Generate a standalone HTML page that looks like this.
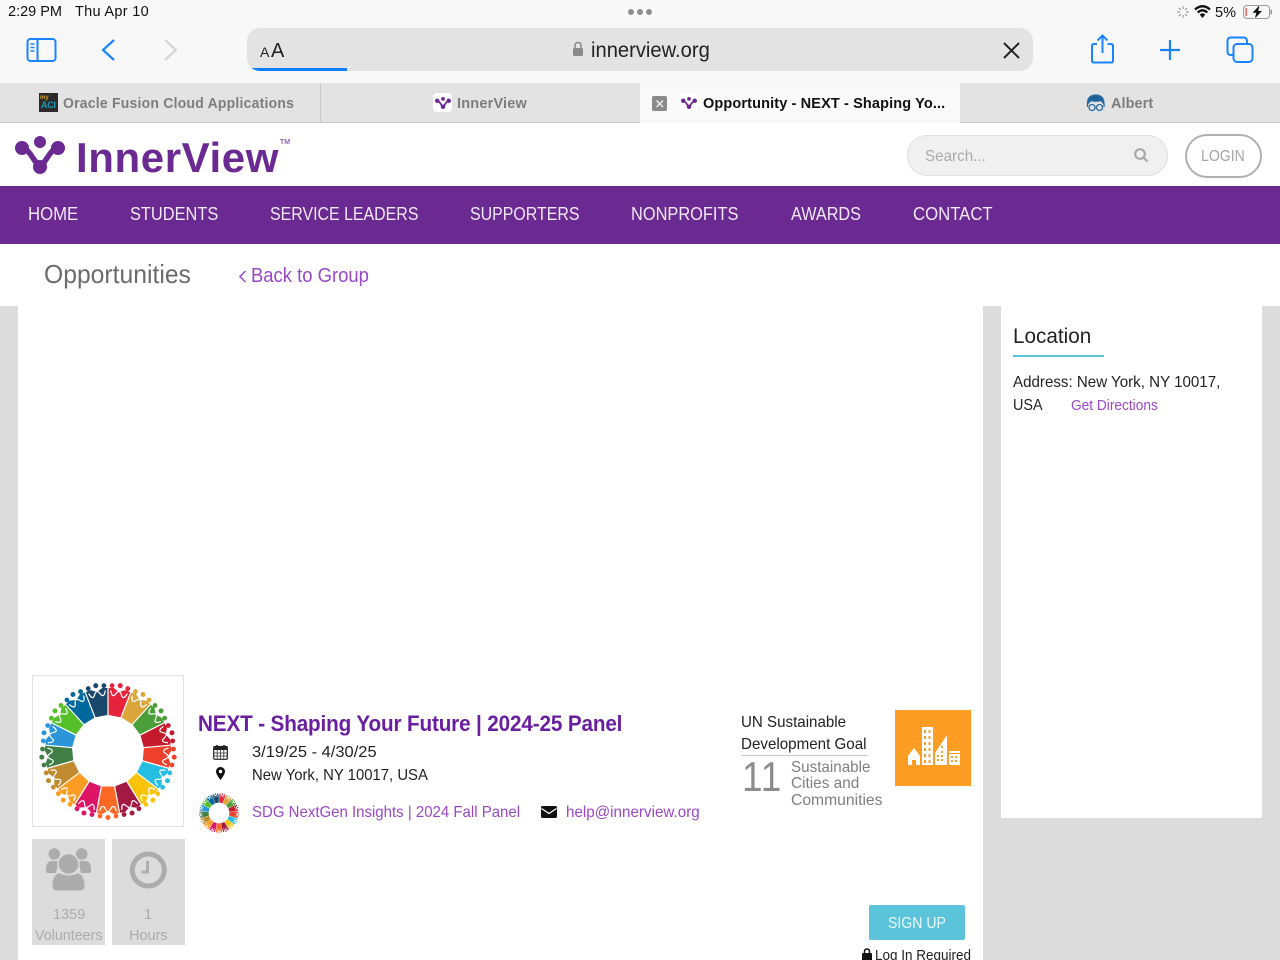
<!DOCTYPE html>
<html><head><meta charset="utf-8"><title>InnerView</title>
<style>
html,body{margin:0;padding:0;width:1280px;height:960px;overflow:hidden;background:#fff}
body{position:relative;font-family:"Liberation Sans",sans-serif;color:#222}
.b{position:absolute}
.t{position:absolute;white-space:nowrap;line-height:1;transform-origin:0 50%}
.n{color:#f1e8f6;font-size:18px;top:205px}
.g{color:#7d7d7d;font-size:14.5px;font-weight:700;top:97px}
.p{color:#9a48c8}
svg{position:absolute;overflow:visible}
</style></head><body>
<svg width="0" height="0" style="position:absolute"><defs>
<g id="mk"><circle cx="0" cy="-13" r="5.500"/><circle cx="-18" cy="-7" r="6.500"/><circle cx="18" cy="-7" r="6.500"/><path d="M-18-7C-10-6-7 6 0 12 7 6 10-6 18-7" stroke-width="5.500" fill="none"/><circle cx="0" cy="12" r="6.500"/></g>
<g id="s"><path d="M-6-35.500 6-35.500 11-62 6-63 0-60-6-63-11-62Z"/><path d="M-8.500-60Q-6-53-3.500-56.500-1.500-60.500 0-60.500 1.500-60.500 3.500-56.500 6-53 8.500-60" fill="none" stroke="#fff" stroke-width="1.200"/><circle cx="0" cy="-66.500" r="2.500"/><circle cx="-8" cy="-65" r="2.400"/><circle cx="8" cy="-65" r="2.400"/></g>
<g id="wheel">
<use href="#s" fill="#E5243B" transform="rotate(10.6)"/>
<use href="#s" fill="#DDA63A" transform="rotate(31.8)"/>
<use href="#s" fill="#4C9F38" transform="rotate(52.9)"/>
<use href="#s" fill="#C5192D" transform="rotate(74.1)"/>
<use href="#s" fill="#EF402B" transform="rotate(95.3)"/>
<use href="#s" fill="#26BDE2" transform="rotate(116.5)"/>
<use href="#s" fill="#FCC30B" transform="rotate(137.6)"/>
<use href="#s" fill="#A21942" transform="rotate(158.8)"/>
<use href="#s" fill="#FD6925" transform="rotate(180)"/>
<use href="#s" fill="#DD1367" transform="rotate(201.2)"/>
<use href="#s" fill="#FD9D24" transform="rotate(222.4)"/>
<use href="#s" fill="#BF8B2E" transform="rotate(243.5)"/>
<use href="#s" fill="#3F7E44" transform="rotate(264.7)"/>
<use href="#s" fill="#2A96D9" transform="rotate(285.9)"/>
<use href="#s" fill="#56C02B" transform="rotate(307.1)"/>
<use href="#s" fill="#00689D" transform="rotate(328.2)"/>
<use href="#s" fill="#19486A" transform="rotate(349.4)"/>
</g></defs></svg>

<!-- browser chrome -->
<div class="b" style="left:0;top:0;width:1280px;height:83px;background:#f8f8f8"></div>
<div class="t" style="left:8px;top:5px;font-size:14.5px;color:#111">2:29 PM</div>
<div class="t" style="left:75px;top:5px;font-size:14.5px;color:#111;letter-spacing:.3px">Thu Apr 10</div>
<div class="b" style="left:628px;top:9px;width:6px;height:6px;border-radius:50%;background:#8f8f8f;box-shadow:9px 0 #8f8f8f,18px 0 #8f8f8f"></div>
<svg style="left:0;top:0" width="1280" height="83" fill="none" stroke="#1a84ff" stroke-width="2">
<rect x="27.500" y="39" width="28" height="22" rx="3"/><path d="M37.500 39V61"/><path d="M30.500 44H34.500M30.500 47.500H34.500M30.500 51H34.500" stroke-width="1.500"/>
<path d="M114 40 103 50 114 60" stroke-width="2.200"/><path d="M165 40 176 50 165 60" stroke="#d6d6d6" stroke-width="2.200"/>
<path d="M1097 44H1093.500Q1092 44 1092 46V60.500Q1092 62.500 1094 62.500H1111Q1113 62.500 1113 60.500V46Q1113 44 1111 44H1107.500M1102.500 53V36M1097.500 40.500 1102.500 35.500 1107.500 40.500"/>
<path d="M1160 50H1180M1170 40V60" stroke-width="2.200"/>
<path d="M1233 55H1231Q1227.500 55 1227.500 51.500V41Q1227.500 37.500 1231 37.500H1243Q1247 37.500 1247 41V44"/><rect x="1233.500" y="44" width="19" height="18" rx="3.500"/>
</svg>
<!-- status -->
<svg style="left:1176px;top:5px" width="14" height="14" stroke="#777" stroke-width="1.200"><path d="M7 1V4M7 10V13M1 7H4M10 7H13M2.800 2.800 4.900 4.900M9.100 9.100 11.200 11.200M2.800 11.200 4.900 9.100M9.100 4.900 11.200 2.800" stroke-opacity=".7"/></svg>
<svg style="left:1194px;top:5px" width="17" height="13" fill="none" stroke="#111" stroke-width="2.300"><path d="M1 4.500Q8.500-2 16 4.500M3.700 7.500Q8.500 3.200 13.300 7.500"/><path d="M5.700 9.500Q8.500 7 11.300 9.500 8.500 13 8.500 13Z" fill="#111" stroke="none"/></svg>
<div class="t" style="left:1215px;top:5.500px;font-size:14.5px;color:#111">5%</div>
<svg style="left:1243px;top:5px" width="30" height="14"><rect x=".5" y=".5" width="26" height="13" rx="3.500" fill="none" stroke="#999"/><rect x="2.500" y="3" width="1.200" height="8" fill="#e33"/><rect x="27.500" y="4.500" width="1.500" height="5" rx=".7" fill="#999"/><path d="M17-.5 9 8H13L11.500 14 19.500 5.800H15.500Z" fill="#111" stroke="#f8f8f8" stroke-width=".5"/></svg>

<!-- url bar -->
<div class="b" style="left:247px;top:28px;width:786px;height:43px;border-radius:13px;background:#e3e3e3;overflow:hidden"><div class="b" style="left:0;top:40px;width:100px;height:3px;background:#0f7ffb"></div></div>
<div class="t" style="left:260px;top:45px;font-size:14px;color:#222">A</div>
<div class="t" style="left:271px;top:41px;font-size:20px;color:#222">A</div>
<svg style="left:572px;top:41px" width="12" height="16"><path d="M3 7V4.500Q3 1.500 6 1.500 9 1.500 9 4.500V7" fill="none" stroke="#8a8a8a" stroke-width="1.500"/><rect x="1" y="7" width="10" height="8" rx="1.500" fill="#8a8a8a"/></svg>
<div class="t" style="left:591px;top:40px;font-size:21px;color:#222;transform:scaleX(.96)">innerview.org</div>
<svg style="left:1003px;top:42px" width="17" height="17" stroke="#222" stroke-width="2"><path d="M1 1 16 16M16 1 1 16"/></svg>

<!-- tabs -->
<div class="b" style="left:0;top:83px;width:1280px;height:39px;background:#e3e3e3"></div>
<div class="b" style="left:0;top:122px;width:1280px;height:1px;background:#c9c9c9"></div>
<div class="b" style="left:320px;top:83px;width:1px;height:39px;background:#c9c9c9"></div>
<div class="b" style="left:640px;top:83px;width:320px;height:40px;background:#f9f9f9"></div>
<div class="b" style="left:39px;top:93px;width:19px;height:19px;background:#2b2b2b"></div>
<div class="t" style="left:41px;top:101px;font-size:9px;font-weight:700;color:#1a9ab5;letter-spacing:-.3px">ACI</div>
<div class="t" style="left:40px;top:95px;font-size:6px;font-weight:700;color:#c9a227">my</div>
<div class="t g" style="left:63px;transform:scaleX(.962);letter-spacing:.25px">Oracle Fusion Cloud Applications</div>
<div class="b" style="left:433px;top:93px;width:19px;height:19px;border-radius:4px;background:#fff"></div>
<svg style="left:443px;top:103px" width="1" height="1" fill="#6a2a92" stroke="#6a2a92"><use href="#mk" transform="scale(.32)"/></svg>
<div class="t g" style="left:457px;letter-spacing:.2px">InnerView</div>
<div class="b" style="left:652px;top:96px;width:15px;height:15px;border-radius:2px;background:#8a8a8a"></div>
<svg style="left:656px;top:100px" width="8" height="8" stroke="#eee" stroke-width="1.500"><path d="M.5.500 7 7M7 .5.500 7"/></svg>
<div class="b" style="left:679px;top:93px;width:19px;height:19px;border-radius:4px;background:#fff"></div>
<svg style="left:689px;top:103px" width="1" height="1" fill="#6a2a92" stroke="#6a2a92"><use href="#mk" transform="scale(.32)"/></svg>
<div class="t g" style="left:703px;color:#111;letter-spacing:.13px">Opportunity - NEXT - Shaping Yo...</div>
<svg style="left:1086px;top:94px" width="20" height="18" fill="none" stroke="#2a6da3" stroke-width="1.300"><path d="M1.500 10Q1 1.500 9.500 1 18 1 18 10L15 6.500Q10 8 5 6.500Z" fill="#1f6096"/><path d="M1.500 10V13M18 10V13"/><circle cx="6" cy="13.500" r="3"/><circle cx="13.500" cy="13.500" r="3"/><path d="M9 13.500H10.500"/></svg>
<div class="t g" style="left:1111px;letter-spacing:.05px">Albert</div>

<!-- site header -->
<svg style="left:40px;top:155px" width="1" height="1" fill="#6a2a92" stroke="#6a2a92"><use href="#mk"/></svg>
<div class="t" style="left:76px;top:137px;font-size:42px;font-weight:700;color:#6a2a92;letter-spacing:.6px">InnerView</div>
<div class="t" style="left:280px;top:139px;font-size:7px;font-weight:700;color:#8f6aaa">TM</div>
<div class="b" style="left:907px;top:135px;width:259px;height:39px;border:1px solid #e0e0e0;border-radius:20px;background:#f0f0f0"></div>
<div class="t" style="left:925px;top:149px;font-size:16px;color:#aaa;transform:scaleX(.95)">Search...</div>
<svg style="left:1133px;top:147px" width="16" height="16" fill="none" stroke="#a9a9a9" stroke-width="2.200"><circle cx="7" cy="7" r="4.800"/><path d="M10.500 10.500 14.500 14.500"/></svg>
<div class="b" style="left:1185px;top:134px;width:73px;height:40px;border:2px solid #b0b0b0;border-radius:22px"></div>
<div class="t" style="left:1201px;top:149px;font-size:16px;color:#a5a5a5;transform:scaleX(.88)">LOGIN</div>

<!-- nav -->
<div class="b" style="left:0;top:186px;width:1280px;height:58px;background:#6a2a92"></div>
<div class="t n" style="left:28px;transform:scaleX(.93)">HOME</div>
<div class="t n" style="left:130px;transform:scaleX(.91)">STUDENTS</div>
<div class="t n" style="left:270px;transform:scaleX(.885)">SERVICE LEADERS</div>
<div class="t n" style="left:470px;transform:scaleX(.885)">SUPPORTERS</div>
<div class="t n" style="left:631px;transform:scaleX(.91)">NONPROFITS</div>
<div class="t n" style="left:791px;transform:scaleX(.9)">AWARDS</div>
<div class="t n" style="left:913px;transform:scaleX(.93)">CONTACT</div>

<div class="t" style="left:44px;top:261px;font-size:26px;color:#6b6b6b;transform:scaleX(.95)">Opportunities</div>
<svg style="left:239px;top:270px" width="8" height="13" fill="none" stroke="#9a48c8" stroke-width="1.500"><path d="M6.500 1 1 6.500 6.500 12"/></svg>
<div class="t p" style="left:251px;top:266px;font-size:20px;transform:scaleX(.922)">Back to Group</div>

<!-- body -->
<div class="b" style="left:0;top:306px;width:1280px;height:654px;background:#dcdcdc"></div>
<div class="b" style="left:18px;top:306px;width:965px;height:654px;background:#fff"></div>
<div class="b" style="left:1001px;top:306px;width:261px;height:512px;background:#fff"></div>

<div class="t" style="left:1013px;top:326px;font-size:21px;color:#222;transform:scaleX(.985)">Location</div>
<div class="b" style="left:1013px;top:355px;width:91px;height:2px;background:#5bc4da"></div>
<div class="t" style="left:1013px;top:375px;font-size:16px;color:#222;transform:scaleX(.945)">Address: New York, NY 10017,</div>
<div class="t" style="left:1013px;top:398px;font-size:16px;color:#222;transform:scaleX(.9)">USA</div>
<div class="t p" style="left:1071px;top:399px;font-size:14.500px;transform:scaleX(.945)">Get Directions</div>

<div class="b" style="left:32px;top:675px;width:150px;height:150px;border:1px solid #e3e3e3"></div>
<svg style="left:108px;top:751px" width="1" height="1"><use href="#wheel"/></svg>

<div class="t" style="left:198px;top:713px;font-size:22px;font-weight:700;color:#6a1fa0;letter-spacing:-.15px;transform:scaleX(.94)">NEXT - Shaping Your Future | 2024-25 Panel</div>
<svg style="left:213px;top:744px" width="15" height="16"><rect x=".7" y="2.500" width="13.600" height="12.800" rx="1" fill="none" stroke="#222" stroke-width="1.200"/><rect x="1" y="2.500" width="13" height="3.500" fill="#222"/><path d="M4 1V4M11 1V4" stroke="#222" stroke-width="1.600"/><path d="M1 9H14M1 12H14M4.200 6V15M7.500 6V15M10.800 6V15" stroke="#333" stroke-width=".8"/></svg>
<div class="t" style="left:252px;top:745px;font-size:16px;color:#222;transform:scaleX(1.03)">3/19/25 - 4/30/25</div>
<svg style="left:216px;top:767px" width="9" height="13"><path d="M4.500 0C2 0 0 2 0 4.500 0 7.500 4.500 13 4.500 13S9 7.500 9 4.500C9 2 7 0 4.500 0Z" fill="#111"/><circle cx="4.500" cy="4.500" r="1.700" fill="#fff"/></svg>
<div class="t" style="left:252px;top:768px;font-size:16px;color:#222;transform:scaleX(.93)">New York, NY 10017, USA</div>
<svg style="left:219px;top:813px" width="1" height="1"><use href="#wheel" transform="scale(.29)"/></svg>
<div class="t p" style="left:252px;top:805px;font-size:16px;transform:scaleX(.937)">SDG NextGen Insights | 2024 Fall Panel</div>
<svg style="left:541px;top:806px" width="16" height="12"><rect width="16" height="12" rx="1.500" fill="#111"/><path d="M.5 2.500 8 7.500 15.500 2.500" fill="none" stroke="#fff" stroke-width="1.200"/></svg>
<div class="t p" style="left:566px;top:805px;font-size:16px;transform:scaleX(.95)">help@innerview.org</div>

<div class="t" style="left:741px;top:715px;font-size:16px;color:#222;transform:scaleX(.945)">UN Sustainable</div>
<div class="t" style="left:741px;top:737px;font-size:16px;color:#222;transform:scaleX(.947)">Development Goal</div>
<div class="b" style="left:741px;top:755px;width:127px;height:1px;background:#c9c9c9"></div>
<div class="t" style="left:742px;top:756px;font-size:42px;color:#8c8c8c;letter-spacing:1px;transform:scaleX(.88)">11</div>
<div class="t" style="left:791px;top:760px;font-size:16px;color:#7f7f7f;transform:scaleX(.95)">Sustainable</div>
<div class="t" style="left:791px;top:776px;font-size:16px;color:#7f7f7f;transform:scaleX(.96)">Cities and</div>
<div class="t" style="left:791px;top:793px;font-size:16px;color:#7f7f7f;transform:scaleX(.98)">Communities</div>
<div class="b" style="left:895px;top:710px;width:76px;height:76px;background:#fd9d24"></div>
<svg style="left:895px;top:710px" width="76" height="76"><g fill="#fff"><path d="M13 46 19 38 25 46V55H21V50H17V55H13Z"/><rect x="27" y="17" width="11" height="38"/><path d="M40 55V43L52 25V55Z"/><rect x="54" y="41" width="11" height="14"/></g><g fill="#fd9d24"><path d="M29 20h2v3h-2zM33.500 20h2v3h-2zM29 26h2v3h-2zM33.500 26h2v3h-2zM29 32h2v3h-2zM33.500 32h2v3h-2zM29 38h2v3h-2zM33.500 38h2v3h-2zM29 44h2v3h-2zM33.500 44h2v3h-2zM29 50h2v3h-2zM33.500 50h2v3h-2zM42 45h2v2h-2zM46 45h2v2h-2zM42 49h2v2h-2zM46 49h2v2h-2zM46 41h2v2h-2zM46 36h2v2h-2zM56 46h2v2h-2zM60 46h2v2h-2zM56 50h2v2h-2zM60 50h2v2h-2zM54 43h11v1h-11z"/></g></svg>

<!-- stats -->
<div class="b" style="left:32px;top:839px;width:73px;height:106px;background:#dcdcdc"></div>
<div class="b" style="left:112px;top:839px;width:73px;height:106px;background:#dcdcdc"></div>
<svg style="left:32px;top:839px" width="73" height="60" fill="#acacac"><circle cx="22.300" cy="15" r="5.800"/><circle cx="49.700" cy="15" r="5.800"/><path d="M14 30Q14 23 19 22L27 22 24 34H16Q14 34 14 32ZM59 30Q59 23 54 22L46 22 49 34H57Q59 34 59 32Z"/><circle cx="36.500" cy="25" r="10.500" stroke="#dcdcdc" stroke-width="1.500"/><path d="M20 47Q20 36 27 33.500 36.500 38.500 46 33.500 53 36 53 47 53 52 48 52H25Q20 52 20 47Z" stroke="#dcdcdc" stroke-width="1"/></svg>
<svg style="left:112px;top:839px" width="73" height="60" fill="none" stroke="#acacac"><circle cx="36.300" cy="31" r="16" stroke-width="5"/><path d="M35.500 22V33H29.500" stroke-width="2.800"/></svg>
<div class="t" style="left:53px;top:908px;font-size:14.500px;color:#ababab">1359</div>
<div class="t" style="left:35px;top:929px;font-size:14.500px;color:#ababab;transform:scaleX(.985)">Volunteers</div>
<div class="t" style="left:144px;top:908px;font-size:14.500px;color:#ababab">1</div>
<div class="t" style="left:129px;top:929px;font-size:14.500px;color:#ababab">Hours</div>

<!-- signup -->
<div class="b" style="left:869px;top:905px;width:96px;height:35px;border-radius:2px;background:#5bc4da"></div>
<div class="t" style="left:888px;top:916px;font-size:16px;color:#eaf8fb;transform:scaleX(.88)">SIGN UP</div>
<svg style="left:862px;top:948px" width="10" height="13"><path d="M2.500 5V3.500Q2.500 1 5 1 7.500 1 7.500 3.500V5" fill="none" stroke="#111" stroke-width="1.500"/><rect y="5" width="10" height="8" rx="1" fill="#111"/></svg>
<div class="t" style="left:875px;top:948px;font-size:15px;color:#222;transform:scaleX(.9)">Log In Required</div>
</body></html>
